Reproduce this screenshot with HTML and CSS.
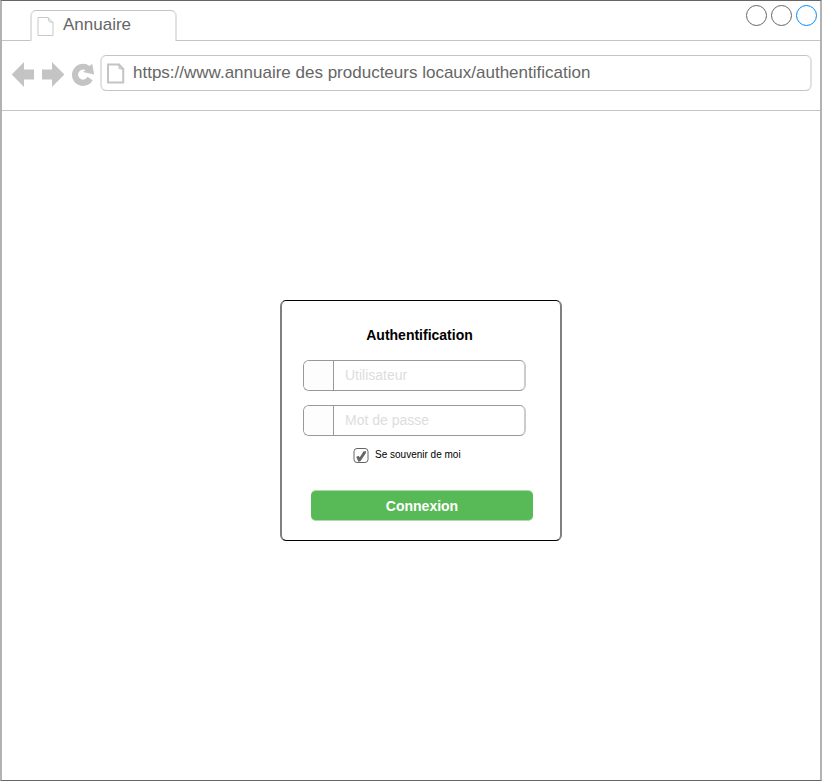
FILE: index.html
```html
<!DOCTYPE html>
<html lang="fr">
<head>
<meta charset="utf-8">
<title>Annuaire</title>
<link rel="stylesheet" href="styles.css">
</head>
<body>
<div class="window">
  <header class="tabs">
    <div class="tab-lead"></div>
    <div class="tab">
      <svg class="tab-icon" width="17" height="20" viewBox="0 0 17 20"><path d="M1 .5H11L16 5.5V18.5H1ZM11 .5L12 4.5L16 5.5"/></svg>
      <span>Annuaire</span>
    </div>
    <div class="controls">
      <i class="dot"></i><i class="dot"></i><i class="dot dot-active"></i>
    </div>
  </header>
  <nav class="toolbar">
    <svg class="nav-icons" width="98" height="40" viewBox="2 55 98 40">
      <path d="M11.7 74.5L24 62V69.4H34V79.6H24V87Z"/>
      <path d="M64.4 74.5L52 62V69.4H42V79.6H52V87Z"/>
      <path d="M92.2 63.8L94.2 74.4L83 71.9L85.6 70.3A5 5 0 1 0 87.6 76.8L92.6 80.2A11 11 0 1 1 89.6 66.1Z"/>
    </svg>
    <div class="address">
      <svg class="page-icon" width="18" height="21" viewBox="0 0 18 21"><path d="M1 1.5H12L16.2 6V19.5H1Z"/><path class="fold" d="M11.7 1.5L12.4 5.4L16.2 6"/></svg>
      <span>https://www.annuaire des producteurs locaux/authentification</span>
    </div>
  </nav>
  <main class="page">
    <form class="card">
      <h1>Authentification</h1>
      <div class="field"><span class="addon"></span><span class="placeholder">Utilisateur</span></div>
      <div class="field"><span class="addon"></span><span class="placeholder">Mot de passe</span></div>
      <div class="remember">
        <svg width="16" height="16" viewBox="0 0 16 16"><rect x="1" y=".5" width="14" height="14" rx="3"/><path d="M3.2 9L5.4 7.8L6.8 9.2L10.6 3.2L13.2 3.2L12.8 5.2L7.4 13.2L5.4 13.8Z"/></svg>
        <span>Se souvenir de moi</span>
      </div>
      <div class="submit">Connexion</div>
    </form>
  </main>
</div>
</body>
</html>
```
FILE: styles.css
```css
* { box-sizing: border-box; }
body {
  margin: 0;
  background: #fff;
  font-family: "Liberation Sans", Arial, sans-serif;
}
.window {
  display: flex;
  flex-direction: column;
  width: 822px;
  height: 781px;
  border: solid #666;
  border-width: 1px 2px;
  border-color: #666 #b2b2b2;
}
.tabs { display: flex; height: 40px; }
.tab-lead { width: 29px; border-bottom: 1px solid #c4c4c4; }
.tab {
  display: flex;
  gap: 9px;
  width: 147px;
  margin: 9px -1px 0;
  padding-left: 5px;
  border: solid #c4c4c4;
  border-width: 1px 2px 0;
  border-color: #c4c4c4 #e1e1e1;
  border-radius: 6px 6px 0 0;
  color: #666;
  font-size: 17px;
  line-height: 27px;
}
.tab-icon { margin-top: 6px; fill: none; stroke: #c8c8c8; }
.controls {
  display: flex;
  flex: 1;
  justify-content: flex-end;
  gap: 4px;
  padding: 4px 3px 0 0;
  border-bottom: 1px solid #c4c4c4;
}
.dot {
  width: 21px;
  height: 21px;
  border: 1px solid #666;
  border-radius: 50%;
}
.dot-active { border-color: #008cff; }
.toolbar {
  display: flex;
  height: 70px;
  padding-top: 14px;
  border-bottom: 1px solid #c4c4c4;
}
.nav-icons { fill: #c4c4c4; }
.address {
  display: flex;
  width: 712px;
  height: 36px;
  padding-left: 5px;
  gap: 8px;
  border: solid #c4c4c4;
  border-width: 1px 2px;
  border-color: #c4c4c4 #e1e1e1;
  border-radius: 6px;
  color: #666;
  font-size: 17px;
  line-height: 33px;
  white-space: nowrap;
}
.page-icon {
  margin-top: 7px;
  fill: none;
  stroke: #c4c4c4;
  stroke-width: 2;
}
.page-icon .fold { stroke-width: 1.3; }
.page { flex: 1; padding: 189px 0 0 278px; }
.card {
  width: 282px;
  height: 241px;
  padding: 25px 0 0 21px;
  border: solid #000;
  border-width: 1px 2px;
  border-color: #000 #808080;
  border-radius: 6px;
}
h1 {
  width: 233px;
  margin: 0 0 16px;
  font-size: 14px;
  line-height: 18px;
  text-align: center;
}
.field {
  display: flex;
  width: 223px;
  height: 31px;
  margin-bottom: 14px;
  border: 1px solid #999;
  border-right: 2px solid #ccc;
  border-radius: 6px;
  overflow: hidden;
}
.addon {
  width: 30px;
  border-right: 1px solid #999;
  background: #fdfdfd;
}
.placeholder {
  padding-left: 11px;
  color: #ddd;
  font-size: 14px;
  line-height: 28px;
}
.remember {
  display: flex;
  gap: 6px;
  margin: -2px 0 0 50px;
  font-size: 10px;
  line-height: 13px;
}
.remember rect { fill: none; stroke: #666; }
.remember path { fill: #666; }
.submit {
  width: 222px;
  height: 31px;
  margin: 26px 0 0 8px;
  border: solid #abdbab;
  border-width: 1px 0;
  border-radius: 5px;
  background: #58b957;
  color: #fff;
  font-size: 14px;
  font-weight: bold;
  line-height: 30px;
  text-align: center;
}
```
